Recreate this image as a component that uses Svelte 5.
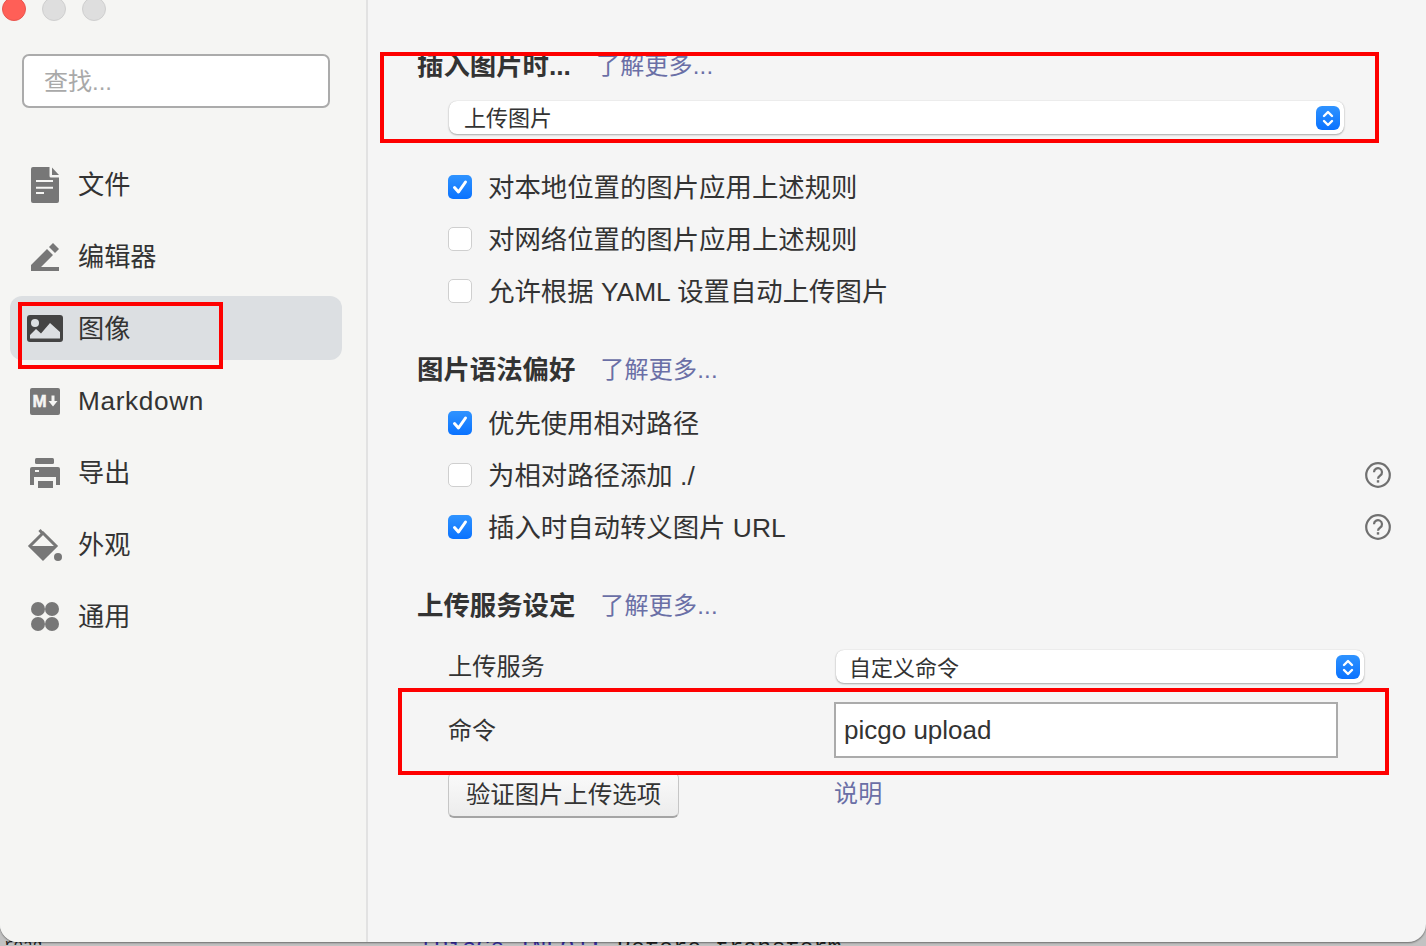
<script>
  const nav = [
    { id: 'file', label: '文件' },
    { id: 'edit', label: '编辑器' },
    { id: 'image', label: '图像', active: true },
    { id: 'md', label: 'Markdown', latin: true },
    { id: 'export', label: '导出' },
    { id: 'look', label: '外观' },
    { id: 'general', label: '通用' }
  ];
  const firstChecks = [
    { label: '对本地位置的图片应用上述规则', on: true },
    { label: '对网络位置的图片应用上述规则' },
    { label: '允许根据 YAML 设置自动上传图片' }
  ];
  const syntaxChecks = [
    { label: '优先使用相对路径', on: true },
    { label: '为相对路径添加 ./', help: true },
    { label: '插入时自动转义图片 URL', on: true, help: true }
  ];
</script>

{#snippet check(item)}
  <div class="check-row">
    <span class="box" class:on={item.on}>
      {#if item.on}
        <svg viewBox="0 0 24 24" width="24" height="24"><path d="M6.5 12.5 L10.5 17 L17.5 7" fill="none" stroke="#fff" stroke-width="3" stroke-linecap="round" stroke-linejoin="round"/></svg>
      {/if}
    </span>
    <span class="check-text">{item.label}</span>
    {#if item.help}
      <svg class="help" viewBox="0 0 26 26" width="26" height="26">
        <circle cx="13" cy="13" r="11.8" fill="none" stroke="#707070" stroke-width="2.2"/>
        <path d="M9 10.2 a4 4 0 1 1 6.2 3.3 c-1.5 1-2.2 1.6-2.2 3.2" fill="none" stroke="#707070" stroke-width="2.2"/>
        <rect x="11.8" y="18.2" width="2.4" height="2.4" fill="#707070"/>
      </svg>
    {/if}
  </div>
{/snippet}

{#snippet stepper()}
  <span class="stepper">
    <svg viewBox="0 0 24 24" width="24" height="24"><path d="M8 10 L12 6 L16 10 M8 15 L12 19 L16 15" fill="none" stroke="#fff" stroke-width="2.4" stroke-linecap="round" stroke-linejoin="round"/></svg>
  </span>
{/snippet}

{#snippet icon(id)}
  <svg class="nav-icon" viewBox="0 0 36 36" width="36" height="36">
    {#if id === 'file'}
      <path d="M6 1 H22.5 V10 a1.5 1.5 0 0 0 1.5 1.5 H32 V35 a2 2 0 0 1-2 2 H6 a2 2 0 0 1-2-2 V3 a2 2 0 0 1 2-2z" fill="#777"/>
      <path d="M25 1.5 L32 9 H25z" fill="#777"/>
      <path d="M9 14 H26 V16 H9z M9 20.7 H26 V22.7 H9z M9 26 H17 V28 H9z" fill="#f5f5f3"/>
    {:else if id === 'edit'}
      <path d="M4 33 V27 L20 11 L26 17 L14 29 H32 V33z" fill="#777"/>
      <path d="M22 9 L26 5 L32 11 L28 15z" fill="#777"/>
    {:else if id === 'image'}
      <rect x="0" y="5" width="36" height="27" rx="3" fill="#444"/>
      <circle cx="8" cy="13" r="4" fill="#dcdfe2"/>
      <path d="M3 28.5 V25 L9 19 L14 23.5 L23 13 L33 22 V28.5z" fill="#dcdfe2"/>
    {:else if id === 'md'}
      <rect x="3" y="6" width="30" height="27" rx="2" fill="#777"/>
      <text x="5.5" y="25" class="md-m">M</text>
      <path d="M24.5 13.5 H27.5 V19 H30.5 L26 24.5 L21.5 19 H24.5z" fill="#f5f5f3"/>
    {:else if id === 'export'}
      <rect x="8" y="4" width="19" height="6" rx="1.5" fill="#777"/>
      <path d="M5 13 H31 a2 2 0 0 1 2 2 V31 H29 V23 H7 V31 H3 V15 a2 2 0 0 1 2-2z" fill="#777"/>
      <rect x="11" y="27" width="15" height="7" fill="#777"/>
      <rect x="8" y="16" width="4" height="2" fill="#f5f5f3"/>
    {:else if id === 'look'}
      <path d="M12.5 4 L16 8 M16 7 L29 20 L16 33 L3 20z" fill="none" stroke="#777" stroke-width="3"/>
      <path d="M2 20 H30 L16 34z" fill="#777"/>
      <circle cx="31" cy="31" r="4" fill="#777"/>
    {:else}
      <circle cx="11" cy="11" r="7" fill="#777"/>
      <circle cx="25" cy="11" r="7" fill="#777"/>
      <circle cx="11" cy="26" r="7" fill="#777"/>
      <circle cx="25" cy="26" r="7" fill="#777"/>
    {/if}
  </svg>
{/snippet}

<div class="page">
  <div class="window">
    <aside class="sidebar">
      <div class="lights">
        <span class="light red"></span>
        <span class="light"></span>
        <span class="light"></span>
      </div>
      <input class="search" placeholder="查找..." />
      <nav class="nav">
        {#each nav as item}
          <div class="nav-item" class:active={item.active}>
            {@render icon(item.id)}
            <span class={item.latin ? 'nav-latin' : 'nav-text'}>{item.label}</span>
          </div>
        {/each}
      </nav>
    </aside>

    <main class="main">
      <div class="heading first"><strong>插入图片时...</strong><a href="#a" class="link">了解更多...</a></div>
      <div class="select wide"><span>上传图片</span>{@render stepper()}</div>

      <div class="checks c1">
        {#each firstChecks as item}{@render check(item)}{/each}
      </div>

      <div class="heading"><strong>图片语法偏好</strong><a href="#b" class="link">了解更多...</a></div>
      <div class="checks c2">
        {#each syntaxChecks as item}{@render check(item)}{/each}
      </div>

      <div class="heading"><strong>上传服务设定</strong><a href="#c" class="link">了解更多...</a></div>

      <div class="form-row service">
        <span class="label">上传服务</span>
        <div class="select narrow"><span>自定义命令</span>{@render stepper()}</div>
      </div>
      <div class="form-row command">
        <span class="label small">命令</span>
        <input class="cmd" value="picgo upload" />
      </div>
      <div class="form-row verify">
        <button class="btn"><span>验证图片上传选项</span></button>
        <a href="#d" class="link doc">说明</a>
      </div>
    </main>
  </div>

  <div class="strip">
    <span class="log-left">read</span>
    <span class="log-a">[PicGo INFO]:</span>
    <span class="log-b">Before transform</span>
  </div>

  <div class="mark m1"></div>
  <div class="mark m2"></div>
  <div class="mark m3"></div>
</div>

<style>
  :global(body) { margin: 0; overflow: hidden; }

  .page {
    position: relative;
    width: 1426px;
    height: 946px;
    overflow: hidden;
    background: #c2c2c2;
    font-family: "Liberation Sans", "Noto Sans CJK SC", sans-serif;
    color: #333;
  }

  .window {
    display: flex;
    height: 942px;
    background: #f5f5f5;
    border-radius: 0 0 18px 18px;
    overflow: hidden;
    box-shadow: 0 1px 2px rgba(0, 0, 0, 0.45);
    position: relative;
    z-index: 1;
  }

  .sidebar {
    position: relative;
    box-sizing: border-box;
    width: 368px;
    flex: none;
    padding: 54px 0 0 0;
    background: #f5f5f3;
    border-right: 2px solid #e2e2e2;
  }

  .lights {
    position: absolute;
    top: -3px;
    left: 2px;
    display: flex;
    gap: 16px;
  }
  .light {
    box-sizing: border-box;
    width: 24px;
    height: 24px;
    border-radius: 50%;
    background: #dedede;
    border: 1px solid #cfcfcf;
  }
  .light.red { background: #ff5f57; border-color: #e9544d; }

  .search {
    display: block;
    box-sizing: border-box;
    width: 308px;
    height: 54px;
    margin-left: 22px;
    padding: 2px 20px 0;
    border: 2px solid #ababab;
    border-radius: 7px;
    background: #fff;
    font: inherit;
    font-size: 24px;
    outline: none;
  }
  .search::placeholder { color: #a9a9a9; opacity: 1; }

  .nav {
    display: flex;
    flex-direction: column;
    gap: 8px;
    width: 332px;
    margin: 44px 0 0 10px;
  }
  .nav-item {
    display: flex;
    align-items: center;
    gap: 15px;
    height: 64px;
    padding-left: 17px;
    border-radius: 12px;
    font-size: 26.2px;
  }
  .nav-item.active { background: #dcdfe2; }
  .nav-text { padding-bottom: 2px; }
  .nav-latin { padding-top: 2px; letter-spacing: 0.65px; }
  .nav-icon { flex: none; overflow: visible; }
  .md-m {
    font: bold 17px "Liberation Sans", sans-serif;
    fill: #f5f5f3;
    stroke: #f5f5f3;
    stroke-width: 0.5px;
  }

  .main {
    flex: 1;
    min-width: 0;
    padding: 48px 35px 0 49px;
    font-size: 26.4px;
  }

  .heading {
    display: flex;
    align-items: center;
    gap: 25px;
    height: 34px;
    margin-top: 35px;
  }
  .heading.first { margin-top: 0; }
  .heading strong { font-weight: 700; font-size: 26.4px; padding-bottom: 4px; }
  .heading .link { padding-bottom: 4px; }

  .link {
    color: #6a6fa6;
    text-decoration: none;
    font-size: 24px;
    letter-spacing: 0.2px;
  }

  .select {
    display: flex;
    align-items: center;
    justify-content: space-between;
    box-sizing: border-box;
    height: 33px;
    padding: 0 4px 0 15px;
    background: #fff;
    border-radius: 8px;
    font-size: 22px;
    box-shadow: 0 1px 2px rgba(0, 0, 0, 0.3), 0 0 1px rgba(0, 0, 0, 0.2);
  }
  .select > span:first-child { padding-bottom: 4px; }
  .select.wide { width: 895px; margin: 19px 0 0 32px; }
  .select.narrow { width: 528px; margin-left: 2px; padding-left: 13px; }
  .select.narrow > span:first-child { padding-bottom: 2px; }

  .stepper {
    display: block;
    width: 24px;
    height: 24px;
    border-radius: 6px;
    background: linear-gradient(#2f93ff, #0a72ff);
  }
  .stepper svg { display: block; }

  .checks { margin-left: 31px; }
  .c1 { margin-top: 27px; }
  .c2 { margin-top: 11px; }

  .check-row {
    display: flex;
    align-items: center;
    gap: 16px;
    height: 52px;
  }
  .check-text { padding-bottom: 4px; }
  .box {
    box-sizing: border-box;
    flex: none;
    width: 24px;
    height: 24px;
    border: 1px solid #cfcfcf;
    border-radius: 5px;
    background: #fff;
  }
  .box.on {
    border: none;
    background: linear-gradient(#2f93ff, #0a72ff);
  }
  .box svg { display: block; }
  .help { margin-left: auto; flex: none; }

  .form-row {
    display: grid;
    grid-template-columns: 386px 1fr;
    grid-template-rows: 100%;
    align-items: center;
    margin-left: 31px;
  }
  .service { margin-top: 28px; height: 33px; }
  .command { margin-top: 19px; height: 56px; }
  .verify { margin-top: 14px; height: 46px; }

  .label { font-size: 24.2px; padding-bottom: 5px; }
  .label.small { font-size: 24px; padding-bottom: 4px; }

  .cmd {
    box-sizing: border-box;
    width: 504px;
    height: 56px;
    padding: 0 8px;
    border: 2px solid #ababab;
    background: #fff;
    font: inherit;
    font-size: 26px;
    color: #333;
    outline: none;
    border-radius: 0;
  }

  .btn {
    box-sizing: border-box;
    justify-self: start;
    width: 231px;
    height: 46px;
    padding: 0 0 4px;
    border: 1px solid #c6c6c6;
    border-bottom: 2px solid #a4a4a4;
    border-radius: 6px;
    background: linear-gradient(#fafafa, #ececec);
    font: inherit;
    font-size: 24.4px;
    color: #333;
  }
  .doc { font-size: 24px; padding-bottom: 8px; }

  .strip {
    position: relative;
    height: 4px;
    overflow: hidden;
    font: 23.4px/1 "Liberation Mono", monospace;
    color: #222;
    white-space: pre;
    display: flex;
    margin-top: -1px;
  }
  .strip span { margin-top: -3px; }
  .log-left { margin-left: 4px; width: 416px; flex: none; font-size: 16px; }
  .log-a { color: #3a2fa5; width: 197px; flex: none; }

  .mark {
    position: absolute;
    z-index: 2;
    box-sizing: border-box;
    border: 4px solid #fe0000;
    pointer-events: none;
  }
  .m1 { left: 380px; top: 52px; width: 999px; height: 91px; }
  .m2 { left: 18px; top: 302px; width: 205px; height: 67px; }
  .m3 { left: 398px; top: 688px; width: 991px; height: 87px; }
</style>
